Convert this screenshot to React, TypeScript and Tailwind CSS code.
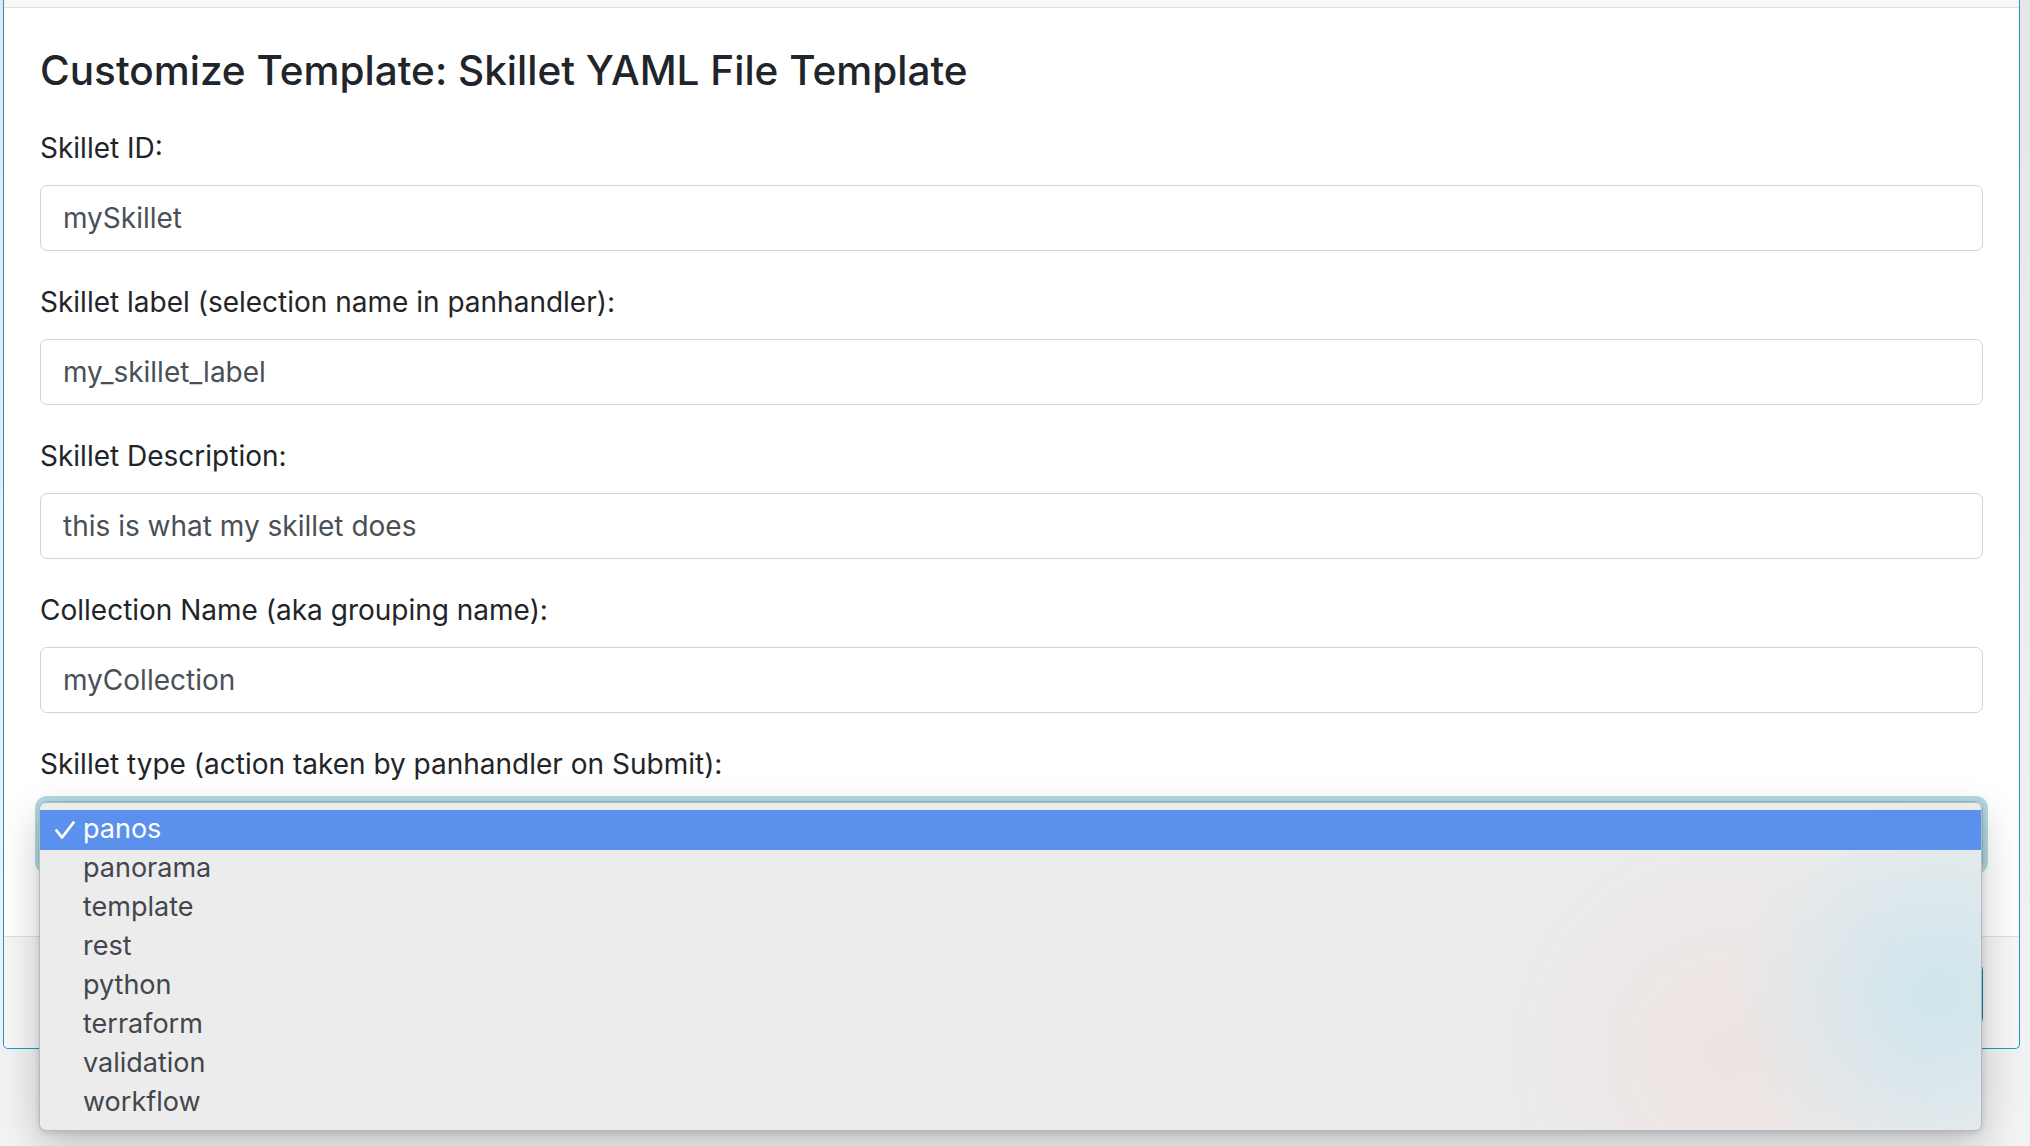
import { JSX } from "react"

const fields = [
  { label: "Skillet ID:", value: "mySkillet" },
  { label: "Skillet label (selection name in panhandler):", value: "my_skillet_label" },
  { label: "Skillet Description:", value: "this is what my skillet does" },
  { label: "Collection Name (aka grouping name):", value: "myCollection" },
]

const skilletTypes = [
  "panos",
  "panorama",
  "template",
  "rest",
  "python",
  "terraform",
  "validation",
  "workflow",
]

function CheckMark(): JSX.Element {
  return (
    <svg width="20" height="18" viewBox="0 0 20 18" fill="none">
      <path
        d="M1.5 9.5 L7 16.5 L18.5 1.5"
        stroke="white"
        strokeWidth="2.8"
        strokeLinecap="round"
        strokeLinejoin="round"
      />
    </svg>
  )
}

function TypeMenu(): JSX.Element {
  return (
    <div className="absolute top-[1px] left-[-1px] right-[1px] z-20 rounded-[7px] border border-[#b9b9bb] bg-[#ececec] bg-[radial-gradient(circle_at_1900px_190px,rgba(206,229,237,1)_0px,rgba(206,229,237,0)_210px),radial-gradient(circle_at_1690px_250px,rgba(238,228,226,1)_0px,rgba(238,228,226,0)_240px)] pt-[7px] pb-[7px] shadow-[0_14px_40px_rgba(0,0,0,0.22),0_2px_6px_rgba(0,0,0,0.12)]">
      {skilletTypes.map((t, i) => (
        <div
          key={t}
          className={`flex items-center text-[27px] ${
            i === 0 ? "h-[40px] bg-[#5b91ec] text-white" : "h-[39px] text-[#42464d]"
          }`}
        >
          <div className="flex w-[43px] shrink-0 pl-[15px]">
            {i === 0 && <CheckMark />}
          </div>
          <span className="pb-[4px] leading-none">{t}</span>
        </div>
      ))}
    </div>
  )
}

export default function App(): JSX.Element {
  return (
    <div className="min-h-[1146px] w-[2030px] bg-linear-to-b from-[#e5e6e8] to-[#f2f3f5] pl-[3px] pr-[10px] font-['Inter','Liberation_Sans',sans-serif] text-[#212529]">
      <div className="rounded-b-[5px] border-x border-b border-[#1a9cc8] bg-white">
        <div className="h-[8px] border-b border-[#dfdfdf] bg-[#f7f7f7]" />

        <div className="px-[36px] pt-[41px] pb-[67px]">
          <h5 className="mb-[34px] text-[40.5px] leading-[44px] font-medium">
            Customize Template: Skillet YAML File Template
          </h5>

          {fields.map(f => (
            <div key={f.label} className="mb-[30px] flex flex-col">
              <label className="mb-[16px] text-[28px] leading-[42px]">{f.label}</label>
              <input
                readOnly
                defaultValue={f.value}
                className="h-[66px] w-full rounded-[7px] border border-[#ced4da] bg-white px-[22px] text-[28px] text-[#495057] outline-none"
              />
            </div>
          ))}

          <div className="flex flex-col">
            <label className="mb-[16px] text-[28px] leading-[42px]">
              Skillet type (action taken by panhandler on Submit):
            </label>
            <div className="relative">
              <div className="h-[68px] w-full rounded-[7px] border border-[#8cc8d8] bg-white shadow-[0_0_0_5px_#b3dae4]" />
              <TypeMenu />
            </div>
          </div>
        </div>

        <div className="flex justify-end rounded-b-[5px] border-t border-[#dfdfdf] bg-[#f7f7f7] px-[36px] pt-[26px] pb-[23px]">
          <button className="h-[62px] rounded-[7px] bg-[#1482ab] px-[26px] text-[28px] text-white">
            Submit
          </button>
        </div>
      </div>
    </div>
  )
}
